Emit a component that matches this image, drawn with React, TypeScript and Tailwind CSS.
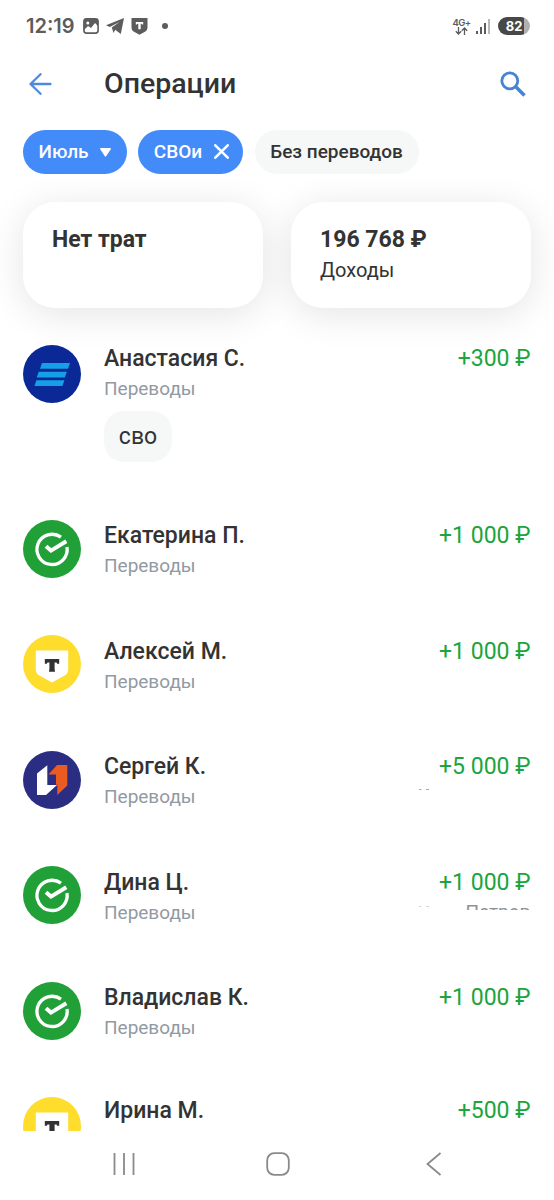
import type { ReactNode } from 'react'

type Bank = 'vtb' | 'sber' | 'tbank' | 'psb'

interface Operation {
  name: string
  amount: string
  bank: Bank
  height: string
  offset: string
  category?: string
  message?: string
  note?: ReactNode
}

const OPERATIONS: Operation[] = [
  { name: 'Анастасия С.', amount: '+300 ₽', bank: 'vtb', height: 'h-[175.5px]', offset: '-mt-px', category: 'Переводы', message: 'сво' },
  { name: 'Екатерина П.', amount: '+1 000 ₽', bank: 'sber', height: 'h-[115.4px]', offset: 'pt-px', category: 'Переводы' },
  { name: 'Алексей М.', amount: '+1 000 ₽', bank: 'tbank', height: 'h-[115.4px]', offset: 'pt-[1.4px]', category: 'Переводы' },
  { name: 'Сергей К.', amount: '+5 000 ₽', bank: 'psb', height: 'h-[115.4px]', offset: 'pt-px', category: 'Переводы', note: <HiddenNote /> },
  { name: 'Дина Ц.', amount: '+1 000 ₽', bank: 'sber', height: 'h-[115.4px]', offset: 'pt-[1.4px]', category: 'Переводы', note: <HiddenNote name="Петров" /> },
  { name: 'Владислав К.', amount: '+1 000 ₽', bank: 'sber', height: 'h-[115.4px]', offset: 'pt-px', category: 'Переводы' },
  { name: 'Ирина М.', amount: '+500 ₽', bank: 'tbank', height: 'h-[115.4px]', offset: '-mt-px' },
]

// Only the upper edge of the sender note stays visible
function HiddenNote({ name }: { name?: string }) {
  return (
    <div className={`flex w-[114px] justify-between overflow-hidden ${name ? 'mt-[7px] h-[5px]' : 'mt-[6px] h-[5px]'}`}>
      <svg viewBox="0 0 14 3" className="h-[3px] w-[14px] shrink-0" stroke={name ? '#d5d7da' : '#a5a8ad'} strokeWidth="1.2">
        <path d="M2 1.5h2.5M9 1.5h3" />
      </svg>
      {name && <span className="-mt-[4px] text-[19px] leading-[22px] text-[#8d9299]">{name}</span>}
    </div>
  )
}

function BankLogo({ bank }: { bank: Bank }) {
  switch (bank) {
    case 'vtb':
      return (
        <svg viewBox="0 0 58 58" className="size-[58px] shrink-0">
          <circle cx="29" cy="29" r="29" fill="#0a2896" />
          <path d="M19 18H47l-2 5.700H17zM15.700 26.700H43.800l-2 5.700H13.700zM13.400 35.200h28l-2 5.700H11.400z" fill="#159fe6" />
        </svg>
      )
    case 'sber':
      return (
        <svg viewBox="0 0 58 58" className="size-[58px] shrink-0">
          <circle cx="29" cy="29" r="29" fill="#21a038" />
          <path d="M38 17.200A15.100 15.100 0 1 0 44 27" fill="none" stroke="#fff" strokeWidth="3.300" />
          <path d="M23 26.200l5 4.400 15.300-9.400" fill="none" stroke="#fff" strokeWidth="4" />
        </svg>
      )
    case 'tbank':
      return (
        <svg viewBox="0 0 58 58" className="size-[58px] shrink-0">
          <circle cx="29" cy="29" r="29" fill="#ffdd2d" />
          <path d="M12.800 15.600h32.400v18.900c0 2.700-1.300 4.700-3.600 6L29 47.500l-12.600-7c-2.300-1.300-3.600-3.300-3.600-6z" fill="#fff" />
          <path d="M21.800 24h14.400v4.800h-2.200c0-.7-.4-1.200-1.100-1.200h-1.300v5.900l.4 3.300h-6l.4-3.300v-5.900h-1.300c-.7 0-1.100.5-1.100 1.200h-2.200z" fill="#333" />
        </svg>
      )
    case 'psb':
      return (
        <svg viewBox="0 0 58 58" className="size-[58px] shrink-0">
          <circle cx="29" cy="29" r="29" fill="#2b2d83" />
          <path d="M24.300 14.200V34H34L23 44H14V22.500z" fill="#fff" />
          <path d="M25.500 23.500l8.500-9.500h10.300v20.500l-10 9.500V33.500l-1.300.5V23.500z" fill="#ea5b21" />
        </svg>
      )
  }
}

function StatusBar() {
  return (
    <div className="flex h-[52px] shrink-0 items-center justify-between pl-[26px] pr-[24px] text-[#5c5c5c]">
      <div className="flex items-center">
        <span className="w-[57px] font-['Inter'] text-[20px] font-semibold leading-6">12:19</span>
        <svg viewBox="0 0 16 16" className="size-4">
          <rect x=".9" y=".9" width="14.200" height="14.200" rx="2.600" fill="none" stroke="currentColor" strokeWidth="1.600" />
          <path d="M1 1h14v7l-3-3-4 5-3-2-4 4z" fill="currentColor" />
          <circle cx="4.800" cy="5" r="1.500" fill="#fff" />
        </svg>
        <svg viewBox="0 0 18 16" className="ml-[7px] h-4 w-[18px]" fill="currentColor">
          <path d="M0 7.300L18 0l-3.200 16-5.600-4.200L7.500 15 5.800 9.500 13.500 4 3.800 8.900z" />
        </svg>
        <svg viewBox="0 0 16 17" className="ml-[7px] h-[17px] w-[17px]">
          <path d="M0 0h16v9.500c0 2-.9 3.300-2.500 4.200L8 16.800l-5.500-3.100C.9 12.800 0 11.500 0 9.500z" fill="currentColor" />
          <path d="M4.300 4h7.400v2.500h-1.200c0-.5-.3-.7-.7-.7h-.6V11.200H6.800V5.800h-.6c-.4 0-.7.2-.7.7H4.300z" fill="#fff" />
        </svg>
        <span className="ml-[14px] size-[6px] rounded-full bg-[#5c5c5c]" />
      </div>
      <div className="flex items-center">
        <div className="flex w-[17px] flex-col items-center">
          <span className="whitespace-nowrap font-['Inter'] text-[9.5px] font-semibold leading-[9px] tracking-[-0.6px]">4G+</span>
          <svg viewBox="0 0 13 8" className="h-2 w-[13px]" fill="none" stroke="currentColor" strokeWidth="1.300">
            <path d="M3.500 0v7M.8 4.200l2.700 2.800 2.700-2.800M9.500 8V1M6.800 3.800L9.500 1l2.700 2.800" />
          </svg>
        </div>
        <svg viewBox="0 0 15 15" className="ml-[6px] size-[15px]" fill="currentColor">
          <rect x="0" y="12" width="2" height="3" />
          <rect x="4" y="8" width="2" height="7" />
          <rect x="8" y="4" width="2" height="11" />
          <rect x="12" y="0" width="2" height="15" fill="#b9b9b9" />
        </svg>
        <div className="ml-[7px] flex h-[18px] w-8 items-center justify-center rounded-full bg-linear-to-r from-[#484848] from-80% to-[#b0b0b0] to-80% font-['Inter'] text-[13px] font-bold leading-none text-white">
          82
        </div>
      </div>
    </div>
  )
}

function Header() {
  return (
    <header className="flex h-[64px] shrink-0 items-center pl-[29px] pr-[28px]">
      <svg viewBox="0 0 23 22" className="h-[22px] w-[23px]" fill="none" stroke="#4a8be0" strokeWidth="2.300" strokeLinecap="round" strokeLinejoin="round">
        <path d="M21.500 11H1.500M11.500 1.200L1.500 11l10 9.800" />
      </svg>
      <h1 className="ml-[52px] text-[28.500px] font-medium leading-8 text-[#333]">Операции</h1>
      <svg viewBox="0 0 26 26" className="ml-auto size-[26px]" fill="none" stroke="#4583d6">
        <circle cx="9.800" cy="9.800" r="8" strokeWidth="2.800" />
        <path d="M15.500 15.500l9 9" strokeWidth="3.500" />
      </svg>
    </header>
  )
}

function Filters() {
  return (
    <div className="mt-[14px] flex h-[43.5px] shrink-0 gap-[11.300px] pl-[23px] text-[19px] font-medium">
      <button className="flex w-[104px] items-center rounded-full bg-[#428bf9] pl-[15.500px] text-white">
        Июль
        <svg viewBox="0 0 10 8" className="ml-[11px] mt-0.5 h-[9px] w-[11px]" fill="#fff">
          <path d="M.8 0h8.400c.7 0 1 .6.600 1.100L5.600 7.400c-.3.500-.9.500-1.200 0L.2 1.100C-.2.600.1 0 .8 0z" />
        </svg>
      </button>
      <button className="flex w-[105px] items-center rounded-full bg-[#428bf9] pl-[15.500px] text-white">
        СВОи
        <svg viewBox="0 0 14 14" className="ml-auto mr-[14px] size-[15px]" fill="none" stroke="#fff" strokeWidth="2.400" strokeLinecap="round">
          <path d="M1.200 1.200l11.600 11.600M12.800 1.200L1.200 12.800" />
        </svg>
      </button>
      <button className="flex w-[164px] items-center justify-center rounded-full bg-[#f6f8f8] text-[#333]">
        Без переводов
      </button>
    </div>
  )
}

function Summary() {
  return (
    <div className="mt-[28.500px] grid shrink-0 grid-cols-2 gap-7 px-[23px] text-[#333]">
      <div className="h-[105.5px] rounded-[32px] bg-white pl-[29px] pt-[22px] shadow-[0_6px_38px_rgba(0,0,0,0.11)]">
        <p className="text-[23px] font-bold leading-[31px]">Нет трат</p>
      </div>
      <div className="h-[105.5px] rounded-[32px] bg-white pl-[29px] pt-[22px] shadow-[0_6px_38px_rgba(0,0,0,0.11)]">
        <p className="text-[23px] font-bold leading-[31px]">196 768 ₽</p>
        <p className="text-[20px] leading-[30px]">Доходы</p>
      </div>
    </div>
  )
}

function OperationRow({ op }: { op: Operation }) {
  return (
    <li className={`flex shrink-0 items-start pl-[23px] pr-[23.500px] ${op.height}`}>
      <BankLogo bank={op.bank} />
      <div className={`ml-[23px] ${op.offset}`}>
        <p className="text-[23px] font-medium leading-[30px] text-[#333]">{op.name}</p>
        {op.category && <p className="text-[19px] leading-[30px] text-[#9299a2]">{op.category}</p>}
        {op.message && (
          <div className="mt-[7px] flex h-[51px] w-[68px] items-center justify-center rounded-[20px] bg-[#f6f8f8] pt-[3px] text-[23px] text-[#333]">
            {op.message}
          </div>
        )}
      </div>
      <div className={`ml-auto flex flex-col items-end ${op.offset}`}>
        <p className="text-[23px] leading-[30px] text-[#1ba53c]">{op.amount}</p>
        {op.note}
      </div>
    </li>
  )
}

function NavBar() {
  return (
    <nav className="flex h-[69px] shrink-0 items-center bg-white pb-1 pl-[112px]">
      <svg viewBox="0 0 24 24" className="size-6" fill="none" stroke="#8a8a8a" strokeWidth="1.800">
        <path d="M2.500 1v22M12 1v22M21.500 1v22" />
      </svg>
      <svg viewBox="0 0 24 24" className="ml-[130px] size-6" fill="none" stroke="#8a8a8a" strokeWidth="1.800">
        <rect x="1.200" y="1.200" width="21.600" height="21.600" rx="7" />
      </svg>
      <svg viewBox="0 0 16 24" className="ml-[136px] h-6 w-4" fill="none" stroke="#8a8a8a" strokeWidth="1.800">
        <path d="M14.500 1L1.500 12l13 11" />
      </svg>
    </nav>
  )
}

export default function App() {
  return (
    <div className="flex h-[1200px] w-[554px] flex-col overflow-hidden bg-white font-['Roboto',sans-serif]">
      <StatusBar />
      <Header />
      <Filters />
      <Summary />
      <ul className="mt-[37px] flex min-h-0 flex-1 flex-col overflow-hidden">
        {OPERATIONS.map((op) => (
          <OperationRow key={op.name} op={op} />
        ))}
      </ul>
      <NavBar />
    </div>
  )
}
